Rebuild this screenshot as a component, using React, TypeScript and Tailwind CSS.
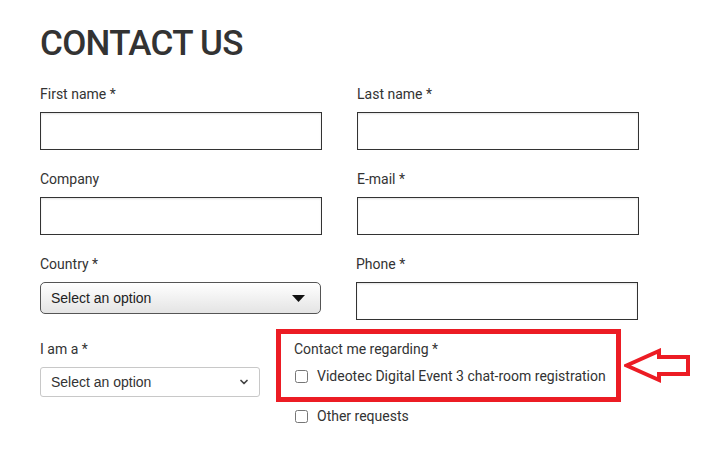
import { ChevronDown } from "lucide-react";

function Field({ label, className = "" }: { label: string; className?: string }) {
  return (
    <div className={className}>
      <label className="block h-5 text-[14px] leading-5 text-[#333]">{label}</label>
      <div className="mt-[8px] h-[38px] w-[282px] border border-[#333] bg-white shadow-[inset_0_1px_2px_rgba(0,0,0,0.12)]" />
    </div>
  );
}

function Checkbox({ label }: { label: string }) {
  return (
    <label className="flex items-center gap-[9px] text-[14px] leading-5 text-[#333]">
      <input type="checkbox" className="m-0 ml-[1px] h-[13px] w-[13px]" />
      <span>{label}</span>
    </label>
  );
}

export default function App() {
  return (
    <div
      className="h-[461px] w-[728px] overflow-hidden bg-white pl-[40px] pt-[24px]"
      style={{ fontFamily: "Roboto, 'Liberation Sans', sans-serif" }}
    >
      <h1 className="h-[39px] text-[35px] font-medium leading-[39px] tracking-[-0.7px] text-[#333]">
        CONTACT US
      </h1>

      <div className="mt-[21px] grid grid-cols-[282px_282px] gap-x-[35px] gap-y-[19px]">
        <Field label="First name *" />
        <Field label="Last name *" />
        <Field label="Company" />
        <Field label="E-mail *" />

        <div>
          <label className="block h-5 text-[14px] leading-5 text-[#333]">Country *</label>
          <div
            className="mt-[8px] flex h-[32px] w-[281px] items-center justify-between rounded-[5px] border border-[#555] bg-gradient-to-b from-white to-[#e4e4e4] pl-[10px] pr-[15px] text-[14px] text-[#222]"
            style={{ fontFamily: "'Liberation Sans', Arial, sans-serif" }}
          >
            <span>Select an option</span>
            <svg width="13" height="7" viewBox="0 0 13 7">
              <path d="M0 0 L13 0 L6.5 7 Z" fill="#111" />
            </svg>
          </div>
        </div>
        <div className="-ml-[1px]">
          <label className="block h-5 text-[14px] leading-5 text-[#333]">Phone *</label>
          <div className="mt-[8px] h-[38px] w-[282px] border border-[#333] bg-white shadow-[inset_0_1px_2px_rgba(0,0,0,0.12)]" />
        </div>
      </div>

      <div className="mt-[9px] flex items-start">
        <div className="w-[220px] pt-[10px]">
          <label className="block h-5 text-[14px] leading-5 text-[#333]">I am a *</label>
          <div
            className="mt-[8px] flex h-[30px] w-[220px] items-center justify-between rounded-[3px] border border-[#c8c8c8] bg-white pl-[10px] pr-[9px] text-[14px] text-[#333]"
            style={{ fontFamily: "'Liberation Sans', Arial, sans-serif" }}
          >
            <span>Select an option</span>
            <ChevronDown className="h-[12px] w-[12px] text-[#444]" strokeWidth={3.5} />
          </div>
        </div>

        <div className="ml-[16px]">
          <div className="flex items-center">
            <div className="h-[73px] w-[345px] border-[5px] border-[#ec1c24] pl-[13px] pt-[5px]">
              <div className="h-5 text-[14px] leading-5 text-[#333]">Contact me regarding *</div>
              <div className="mt-[7px]">
                <Checkbox label="Videotec Digital Event 3 chat-room registration" />
              </div>
            </div>
            <svg className="ml-[3px]" width="66" height="36" viewBox="0 0 66 36">
              <path
                d="M2.5 17.5 L35 3 L35 9 L64 9 L64 26 L35 26 L35 32 Z"
                fill="none"
                stroke="#ec1c24"
                strokeWidth="4"
                strokeLinejoin="miter"
              />
            </svg>
          </div>
          <div className="mt-[4px] pl-[18px]">
            <Checkbox label="Other requests" />
          </div>
        </div>
      </div>
    </div>
  );
}
